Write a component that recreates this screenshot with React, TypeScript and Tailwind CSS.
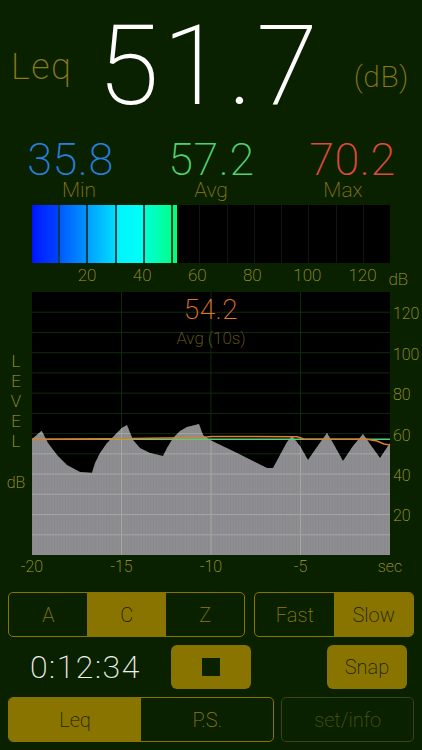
import React from "react";

const wave: [number, number][] = [
  [0, 147], [9.7, 138.7], [16, 151], [25, 163], [35, 173], [48, 180], [60, 180.7],
  [63, 171], [68, 161], [75, 151], [81, 145], [90, 135.7], [95, 133], [101, 148],
  [108, 156], [118, 161], [131, 164], [135, 156], [141, 146], [148, 139], [155, 135],
  [167, 132], [171, 143], [178, 148], [201, 159], [221, 169], [235, 176], [241, 176],
  [248, 163], [255, 150], [260, 144], [268, 154], [276, 168], [285, 155], [295, 141],
  [301, 151], [311, 169], [321, 154], [331, 142], [338, 152], [348, 166], [358, 151],
];
const wavePts = [...wave, [358, 263], [0, 263]].map((p) => p.join(",")).join(" ");
const orangePts = [
  [0, 147.5], [100, 146.5], [170, 145.5], [180, 144.5], [265, 144.7], [272, 147],
  [335, 147.3], [345, 149], [352, 152], [358, 153],
].map((p) => p.join(",")).join(" ");

const hLines = Array.from({ length: 12 }, (_, i) => (i + 1) * (263 / 13));
const vLines = [89.5, 179, 268.5];

function Grid({ color }: { color: string }) {
  return (
    <g stroke={color} strokeWidth={1}>
      {hLines.map((y) => (
        <line key={"h" + y} x1={0} x2={358} y1={y} y2={y} />
      ))}
      {vLines.map((x) => (
        <line key={"v" + x} x1={x} x2={x} y1={0} y2={263} />
      ))}
    </g>
  );
}

function Chart() {
  return (
    <div className="relative w-[358px] h-[263px] bg-black">
      <svg className="absolute inset-0" width={358} height={263} viewBox="0 0 358 263">
        <defs>
          <clipPath id="waveClip">
            <polygon points={wavePts} />
          </clipPath>
          <pattern id="stripes" width="2.75" height="10" patternUnits="userSpaceOnUse">
            <rect x="0" y="0" width="1" height="10" fill="#868688" />
          </pattern>
        </defs>
        <Grid color="#0f2a0f" />
        <polygon points={wavePts} fill="#8e8e92" />
        <polygon points={wavePts} fill="url(#stripes)" opacity={0.6} />
        <g clipPath="url(#waveClip)">
          <Grid color="#a3a8a3" />
        </g>
        <line x1={0} x2={358} y1={147.3} y2={147.3} stroke="#4fd07c" strokeWidth={1.4} />
        <polyline points={orangePts} fill="none" stroke="#e47a2c" strokeWidth={1.5} />
      </svg>
      <div className="relative flex flex-col items-center pt-[4px]">
        <div className="text-[28px] leading-none font-extralight text-[#e0782a] tracking-[0.5px]">54.2</div>
        <div className="mt-[6px] text-[17px] leading-none font-extralight text-[#7a6814]">Avg (10s)</div>
      </div>
    </div>
  );
}

function Seg({
  items,
  active,
  className,
}: {
  items: string[];
  active: number;
  className: string;
}) {
  return (
    <div className={"flex h-[45px] border border-[#8a7400] rounded-[5px] overflow-hidden " + className}>
      {items.map((t, i) => (
        <div
          key={t}
          className={
            "flex-1 flex items-center justify-center text-[20px] font-extralight " +
            (i === active ? "bg-[#8a7400] text-[#142000]" : "text-[#8f7a10]")
          }
        >
          {t}
        </div>
      ))}
    </div>
  );
}

export default function App() {
  return (
    <div className="w-[422px] h-[750px] overflow-hidden bg-[#0a2100] font-[Roboto,sans-serif] flex flex-col">
      {/* Top reading */}
      <div className="h-[130px] flex items-start">
        <div className="ml-[11px] mt-[49px] text-[36px] leading-none font-extralight text-[#8a7a1a] tracking-[1.5px]">Leq</div>
        <div className="ml-[25px] mt-[10px] text-[112px] leading-none font-extralight text-white tracking-[3.5px]">51.7</div>
        <div className="ml-auto mr-[13px] mt-[62px] text-[30px] leading-none font-extralight text-[#8a7a1a] tracking-[0.5px]">(dB)</div>
      </div>

      {/* Min Avg Max */}
      <div className="mt-[10px] grid grid-cols-3 w-[423px] text-[45px] leading-[40px] font-extralight tracking-[0.5px]">
        <div className="text-center text-[#2680e0]">35.8</div>
        <div className="text-center text-[#4fd070]">57.2</div>
        <div className="text-center text-[#e04a38]">70.2</div>
      </div>
      <div className="mt-[2px] ml-[13px] w-[396px] grid grid-cols-3 text-[21px] leading-[17px] font-extralight text-[#8a7a1a]">
        <div className="text-center">Min</div>
        <div className="text-center">Avg</div>
        <div className="text-center">Max</div>
      </div>

      {/* Bar meter */}
      <div className="mt-[6px] ml-[32px] w-[358px] h-[58px] bg-black flex">
        <div className="flex-1 bg-linear-to-r from-[#0010ff] to-[#0040ff]" />
        <div className="flex-1 border-l-2 border-[#0c3c4c] bg-linear-to-r from-[#0058ff] to-[#0092ff]" />
        <div className="flex-1 border-l-2 border-[#0c3c4c] bg-linear-to-r from-[#00a0ff] to-[#00dcff]" />
        <div className="flex-1 border-l-2 border-[#0c4c4c] bg-linear-to-r from-[#00f4ff] to-[#00fff4]" />
        <div className="flex-1 border-l-2 border-[#0c4c44] bg-linear-to-r from-[#00ffd4] to-[#00ff8c]" />
        <div className="flex-1 border-l-2 border-[#0c4c30] flex">
          <div className="w-[4px] h-full bg-[#00ff7c]" />
        </div>
        {Array.from({ length: 7 }, (_, i) => (
          <div key={i} className="flex-1 border-l border-[#141414]" />
        ))}
      </div>

      {/* Bar scale */}
      <div className="mt-[4px] flex items-start h-[17px]">
        <div className="ml-[32px] w-[330.5px] flex justify-between text-[17px] leading-none font-extralight text-[#a49a26]">
          {["", "20", "40", "60", "80", "100", "120"].map((t, i) => (
            <div key={i} className="w-0 flex justify-center">
              <span>{t}</span>
            </div>
          ))}
        </div>
        <div className="ml-[26px] mt-[4px] text-[17px] leading-none font-extralight text-[#a49a26]">dB</div>
      </div>

      {/* Chart */}
      <div className="mt-[8px] flex">
        <div className="w-[32px] flex flex-col items-center pt-[59px] text-[17px] font-extralight text-[#aaa22a]">
          {["L", "E", "V", "E", "L"].map((c, i) => (
            <div key={i} className="leading-[20px]">{c}</div>
          ))}
          <div className="mt-[22px] leading-[20px] text-[16px]">dB</div>
        </div>
        <Chart />
        <div className="w-[32px] flex flex-col pt-[2px] pl-[3px] text-[16px] font-extralight text-[#aaa22a]">
          {["120", "100", "80", "60", "40", "20"].map((t) => (
            <div key={t} className="h-[40.46px] flex items-center">{t}</div>
          ))}
        </div>
      </div>

      {/* X axis */}
      <div className="mt-[4px] ml-[32px] w-[358px] h-[16px] flex justify-between text-[16px] leading-none font-extralight text-[#aaa22a]">
        {["-20", "-15", "-10", "-5", "sec"].map((t) => (
          <div key={t} className="w-0 flex justify-center">
            <span>{t}</span>
          </div>
        ))}
      </div>

      {/* Row 1 buttons */}
      <div className="mt-[17px] flex px-[8px]">
        <Seg items={["A", "C", "Z"]} active={1} className="w-[238px]" />
        <Seg items={["Fast", "Slow"]} active={1} className="ml-[9px] w-[160px]" />
      </div>

      {/* Row 2 */}
      <div className="mt-[8px] flex items-center px-[8px] h-[44px]">
        <div className="w-[163px] pl-[22px] text-[32px] leading-none font-extralight text-[#eef2ee] tracking-[1.5px]">0:12:34</div>
        <div className="w-[80px] h-[44px] rounded-[6px] bg-[#8a7400] flex items-center justify-center">
          <div className="w-[18px] h-[18px] bg-[#0a2100]" />
        </div>
        <div className="ml-auto mr-[7px] w-[80px] h-[44px] rounded-[6px] bg-[#8a7400] flex items-center justify-center text-[20px] font-extralight text-[#142000]">
          Snap
        </div>
      </div>

      {/* Row 3 */}
      <div className="mt-[8px] flex px-[8px]">
        <Seg items={["Leq", "P.S."]} active={0} className="w-[267px]" />
        <div className="ml-[7px] w-[133px] h-[45px] border border-[#3a4410] rounded-[5px] flex items-center justify-center text-[20px] font-extralight text-[#4e5412]">
          set/info
        </div>
      </div>
    </div>
  );
}
